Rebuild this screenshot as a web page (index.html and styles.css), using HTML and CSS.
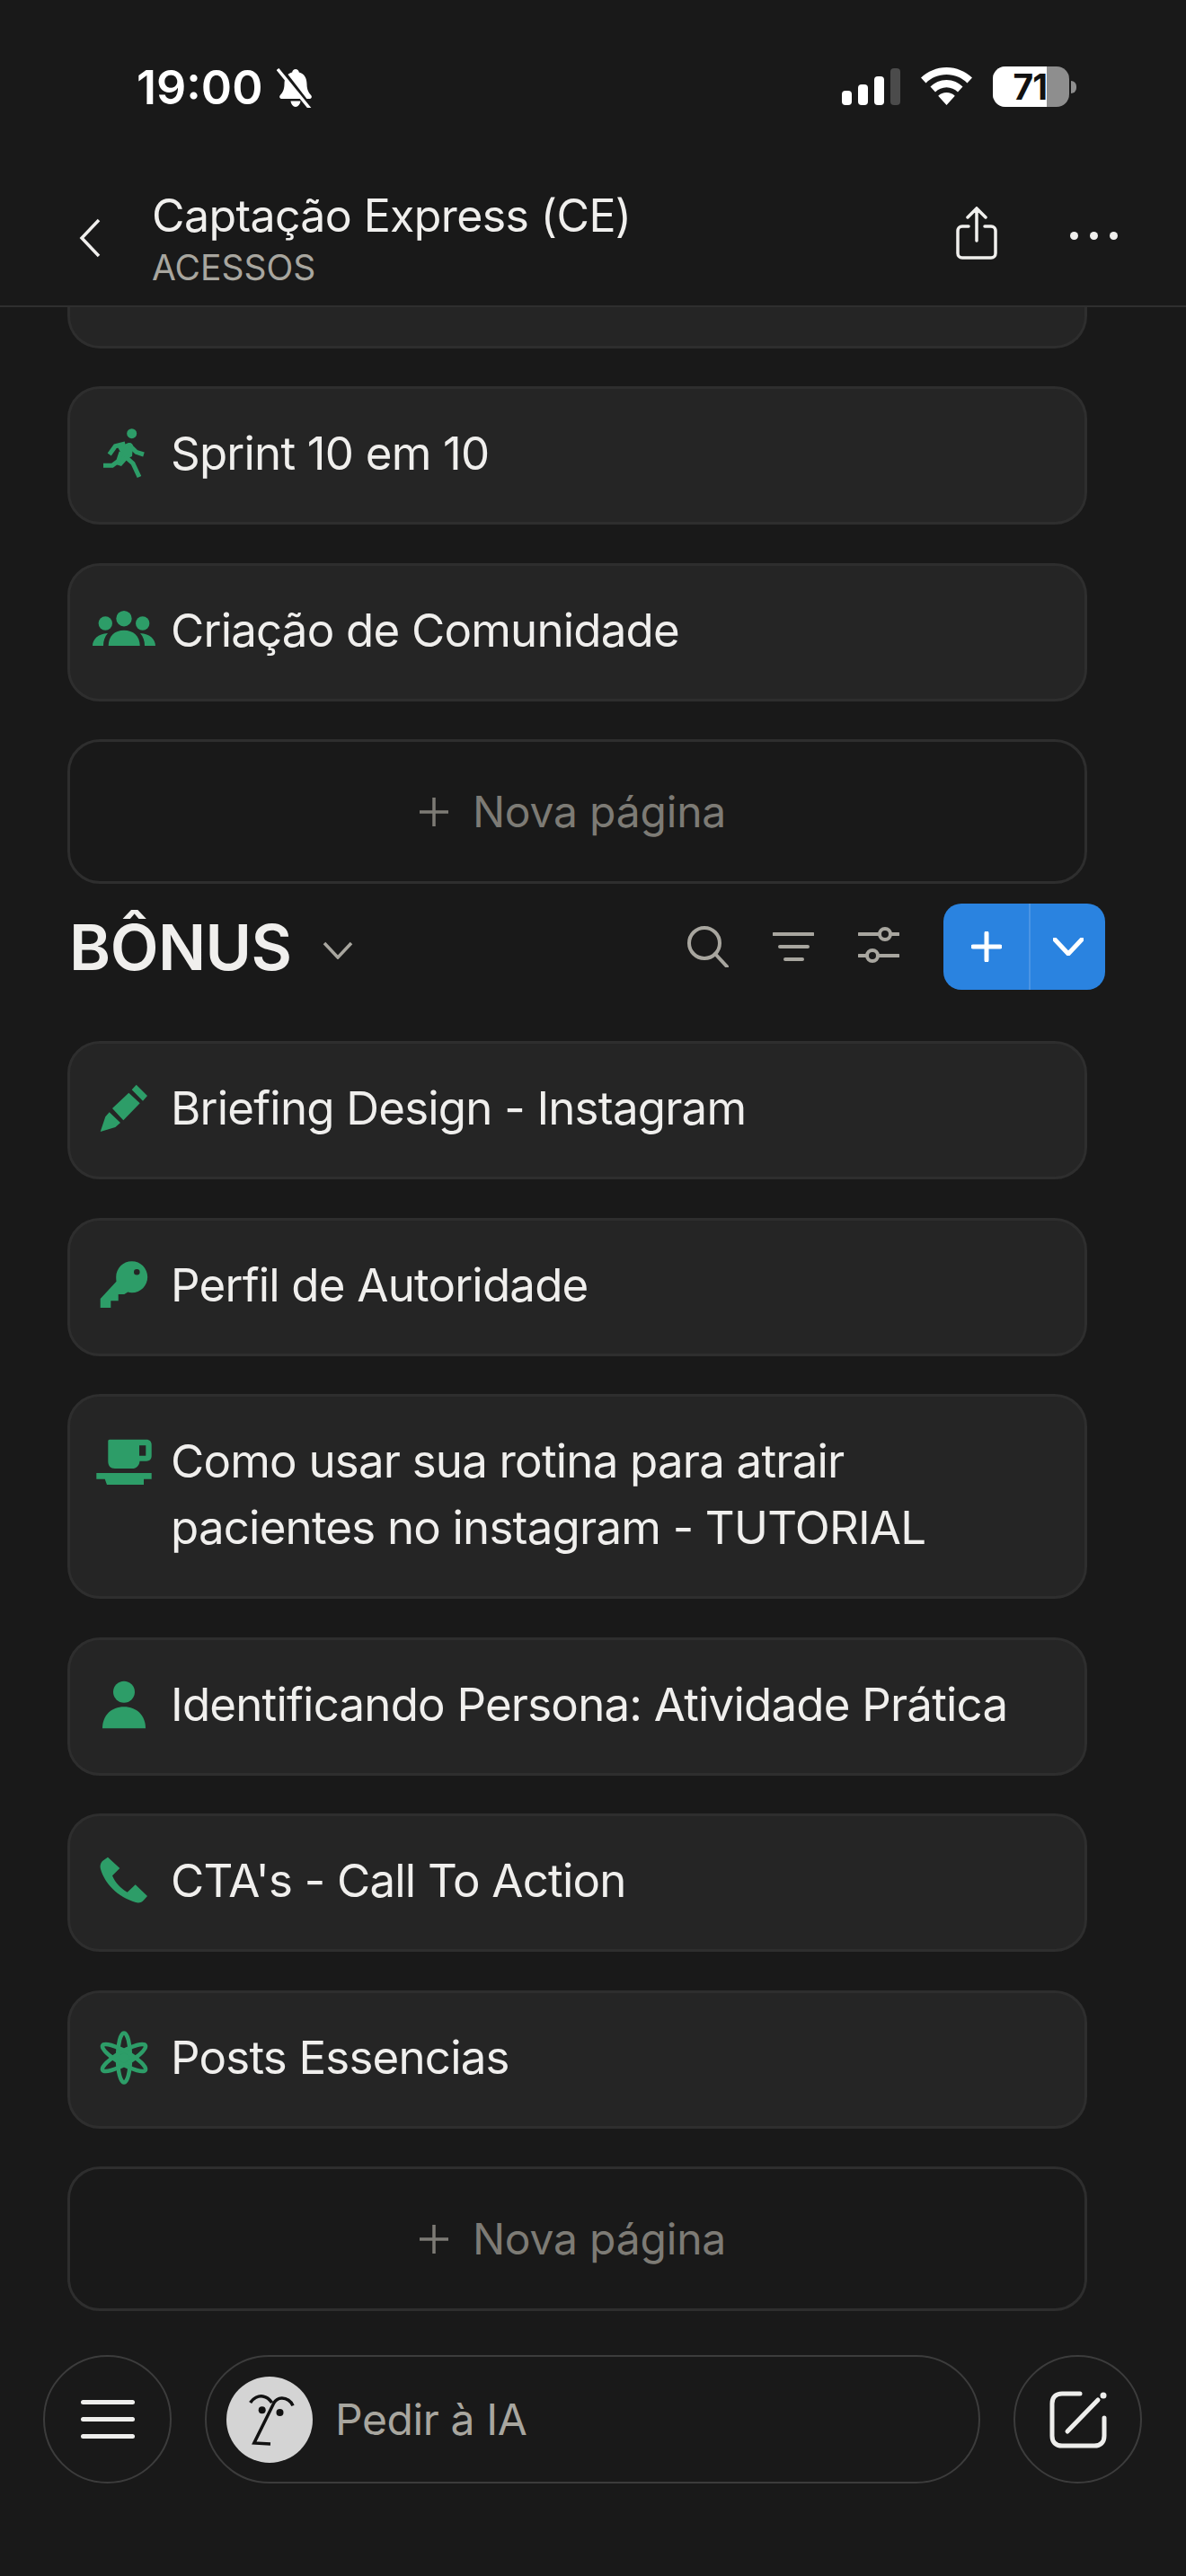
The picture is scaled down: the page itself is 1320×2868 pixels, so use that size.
FILE: index.html
```html
<!DOCTYPE html>
<html lang="pt-BR">
<head>
    <meta charset="UTF-8">
    <meta name="viewport" content="width=device-width, initial-scale=1.0">
    <title>Captação Express (CE)</title>
    <link rel="stylesheet" href="styles.css">
</head>
<body>

<div class="status-bar">
    <div class="status-left">
        <span class="time">19:00</span>
        <svg class="bell" viewBox="0 0 42 44"><path d="M21 1c2 0 3.500 1.500 3.800 3.500 6 1.500 8.700 6.500 8.700 13 0 7 2.500 10 5 13 1 1.500 0 3.500-2 3.500H5.500c-2 0-3-2-2-3.500 2.500-3 5-6 5-13 0-6.500 2.700-11.500 8.700-13C17.500 2.500 19 1 21 1zM15.500 36.500h11c-.4 3.500-2.700 6.500-5.500 6.500s-5.100-3-5.500-6.500z"/><path class="bell-cut" d="M4 0l34 44"/><path class="bell-slash" d="M1 1l36 44"/></svg>
    </div>
    <div class="status-right">
        <div class="signal">
            <span class="bar bar-1"></span>
            <span class="bar bar-2"></span>
            <span class="bar bar-3"></span>
            <span class="bar bar-4"></span>
        </div>
        <svg class="wifi" viewBox="0 0 57 42"><path d="M28.500 0C39.500 0 49.500 4.500 57 11.500l-5.500 6C45.500 11.500 37.500 8 28.500 8S11.500 11.500 5.500 17.500L0 11.500C7.500 4.500 17.500 0 28.500 0zM28.500 14c7 0 13.500 3 18 7.500l-5.500 6c-3.200-3.200-7.700-5.300-12.500-5.300S19.200 24.300 16 27.500l-5.500-6C15 17 21.500 14 28.500 14zM28.500 28c3.500 0 6.800 1.300 9.300 3.700L28.500 42l-9.300-10.300c2.500-2.400 5.800-3.700 9.300-3.700z"/></svg>
        <div class="battery">
            <div class="battery-body">
                <div class="battery-fill"><span>71</span></div>
            </div>
            <span class="battery-nub"></span>
        </div>
    </div>
</div>

<div class="top-bar">
    <svg class="back" viewBox="0 0 24 44"><path d="M22 2L3 22l19 20"/></svg>
    <div class="top-title">
        <div class="title">Captação Express (CE)</div>
        <div class="subtitle">ACESSOS</div>
    </div>
    <svg class="share" viewBox="0 0 48 60"><path d="M24 38V3M14 12L24 2l10 10M15 22H8c-3 0-5 2-5 5v25c0 3 2 5 5 5h32c3 0 5-2 5-5V27c0-3-2-5-5-5h-7"/></svg>
    <div class="more"><span></span><span></span><span></span></div>
</div>

<div class="content">
    <div class="card card-cut"></div>

    <div class="card">
        <svg class="icon" viewBox="0 0 70 74">
            <circle cx="43.700" cy="12.700" r="5.500"/>
            <path d="M28 28l12-5c3-.5 4.500 1 5 3l-1 12-4 2-8 9-6-2 6-12z"/>
            <path class="limb" d="M18.700 36l6.600-9.300 11-2.700M40.300 25l8.400 8.300L57 36M12 48.300h10l6.700-5 3.300-10M36 38l9 8 7 15"/>
        </svg>
        <span class="card-text">Sprint 10 em 10</span>
    </div>

    <div class="card">
        <svg class="icon" viewBox="0 0 70 74">
            <circle cx="35" cy="21.700" r="8.700"/>
            <circle cx="14.300" cy="27" r="7.700"/>
            <circle cx="55.700" cy="27" r="7.700"/>
            <path d="M17.700 52c0-11 7-17.300 17.300-17.300S52.700 41 52.700 52z"/>
            <path d="M0 52c0-7 6-13.500 17-14-3.500 4-5 8.500-5 14zM70 52c0-7-6-13.500-17-14 3.500 4 5 8.500 5 14z"/>
        </svg>
        <span class="card-text">Criação de Comunidade</span>
    </div>

    <div class="new-page">
        <svg class="new-plus" viewBox="0 0 34 34"><path d="M17 1v32M1 17h32"/></svg>
        <span>Nova página</span>
    </div>

    <div class="section-head">
        <div class="section-name">
            <h2>BÔNUS</h2>
            <svg class="section-caret" viewBox="0 0 34 20"><path d="M2 2l15 16L32 2"/></svg>
        </div>
        <div class="section-tools">
            <svg class="tool" viewBox="0 0 46 46"><circle cx="19" cy="19" r="17"/><path d="M31 31l13 14"/></svg>
            <svg class="tool" viewBox="0 0 46 46"><path d="M1 9h44M8 23h31M14 37h19"/></svg>
            <svg class="tool" viewBox="0 0 46 46"><path d="M1 9h23M36 9h9M1 33h9M22 33h23"/><circle cx="30" cy="9" r="6"/><circle cx="16" cy="33" r="6"/></svg>
            <div class="add-btn">
                <span class="add-main"><svg viewBox="0 0 34 34"><path d="M17 2v30M2 17h30"/></svg></span>
                <span class="add-more"><svg viewBox="0 0 34 20"><path d="M2 2l15 16L32 2"/></svg></span>
            </div>
        </div>
    </div>

    <div class="card">
        <svg class="icon" viewBox="0 0 70 74">
            <path d="M8.700 61l5.600-16.700 4.400-5L31 51l-5.700 5zM22 35l18.300-17.300 12.400 11.600-18.400 19zM43.700 14.300l5-5.600L61 21l-5 5.700z"/>
        </svg>
        <span class="card-text">Briefing Design - Instagram</span>
    </div>

    <div class="card">
        <svg class="icon" viewBox="0 0 70 74">
            <path fill-rule="evenodd" d="M43.700 8.200c9.700 0 17.500 7.800 17.500 17.500s-7.800 17.500-17.500 17.500c-1.500 0-3-.2-4.400-.6L35.300 45h-6.600v7.300h-8.400V60H8.700V50L26.500 30.700c-.2-1.600-.3-3.300-.3-5 0-9.700 7.800-17.500 17.500-17.500zM49.300 17a3.300 3.300 0 1 0 0 6.600 3.300 3.300 0 0 0 0-6.600z"/>
        </svg>
        <span class="card-text">Perfil de Autoridade</span>
    </div>

    <div class="card">
        <svg class="icon" viewBox="0 0 70 74">
            <path fill-rule="evenodd" d="M19 10.700h41c3.500 0 5.700 2.300 5.700 5.700v12.600c0 3.500-2.200 5.700-5.700 5.700h-7.500c-.5 5-3.500 8.300-8.500 8.300H25c-5 0-7.700-3-7.700-8V12.500c0-1 .7-1.800 1.700-1.800zM52 17.300v11.400h7.300V17.300z"/>
            <path d="M4.300 48h61.400v6.700H57V61H16l-2.300-6.300H4.300z"/>
        </svg>
        <span class="card-text">Como usar sua rotina para atrair<br>pacientes no instagram - TUTORIAL</span>
    </div>

    <div class="card">
        <svg class="icon" viewBox="0 0 70 74">
            <circle cx="35" cy="20.700" r="12"/>
            <path d="M11 61.300c0-14.500 10-24 24-24s24 9.500 24 24z"/>
        </svg>
        <span class="card-text">Identificando Persona: Atividade Prática</span>
    </div>

    <div class="card">
        <svg class="icon" viewBox="0 0 70 74">
            <path d="M17 8.700l13.300 12.300-8.300 8.300c3.500 8 9 14 16.700 18.400l9-8.400L61 52l-4 4.500c-2 2.500-5.500 3.500-9 2.500C28 53 13.500 38 9 22c-1-3.500-.3-6.500 2-9z"/>
        </svg>
        <span class="card-text">CTA's - Call To Action</span>
    </div>

    <div class="card">
        <svg class="icon" viewBox="0 0 70 74">
            <g class="atom">
                <ellipse cx="35" cy="35" rx="7" ry="27.500"/>
                <ellipse cx="35" cy="35" rx="7" ry="27.500" transform="rotate(60 35 35)"/>
                <ellipse cx="35" cy="35" rx="7" ry="27.500" transform="rotate(120 35 35)"/>
            </g>
            <path d="M35 29l5.200 3v6L35 41l-5.200-3v-6z"/>
        </svg>
        <span class="card-text">Posts Essencias</span>
    </div>

    <div class="new-page">
        <svg class="new-plus" viewBox="0 0 34 34"><path d="M17 1v32M1 17h32"/></svg>
        <span>Nova página</span>
    </div>
</div>

<div class="bottom-bar">
    <div class="round-btn">
        <div class="burger"><span></span><span></span><span></span></div>
    </div>
    <div class="ask-box">
        <svg class="avatar" viewBox="0 0 96 96">
            <circle cx="48" cy="48" r="48" fill="#d4d4d4"/>
            <path d="M26.600 29c3-5 9-8 14-7 5 1 8 4 10 7M74 32.300c-2-5-7-8.500-12.500-8.300-4 .2-7 2.500-8.500 5L30.800 74l18.200 1"/>
            <circle class="eye" cx="39.700" cy="37.300" r="4"/>
            <circle class="eye" cx="59.500" cy="40" r="4"/>
        </svg>
        <span class="ask-text">Pedir à IA</span>
    </div>
    <div class="round-btn">
        <svg class="compose" viewBox="0 0 64 64"><path d="M34 3H14C7 3 3 7 3 14v36c0 7 4 11 11 11h36c7 0 11-4 11-11V30"/><path class="compose-pen" d="M20 45L54 10"/><circle cx="60" cy="5" r="3.500"/></svg>
    </div>
</div>

</body>
</html>
```

FILE: styles.css
```css
* {
    box-sizing: border-box;
}
html, body {
    margin: 0;
    padding: 0;
}
body {
    width: 1320px;
    height: 2868px;
    overflow: hidden;
    display: flex;
    flex-direction: column;
    background-color: #191919;
    color: #f0efed;
    font-family: Inter, "Liberation Sans", sans-serif;
}

/* status bar */
.status-bar {
    height: 202px;
    flex: none;
    display: flex;
    justify-content: space-between;
    padding: 74px 122px 0 152px;
}
.status-left {
    display: flex;
    align-items: flex-start;
    gap: 16px;
}
.time {
    font-size: 52px;
    font-weight: 600;
    line-height: 48px;
    color: #fff;
}
.bell {
    width: 42px;
    height: 44px;
    margin-top: 2px;
    fill: #fff;
}
.bell-cut {
    stroke: #191919;
    stroke-width: 5;
    fill: none;
}
.bell-slash {
    stroke: #fff;
    stroke-width: 3.500;
    fill: none;
}
.status-right {
    display: flex;
    align-items: flex-start;
}
.signal {
    display: flex;
    align-items: flex-end;
    gap: 7px;
    height: 43px;
    margin-right: 23px;
}
.bar {
    width: 11px;
    border-radius: 4px;
    background-color: #fff;
}
.bar-1 {
    height: 16px;
}
.bar-2 {
    height: 23px;
}
.bar-3 {
    height: 32px;
}
.bar-4 {
    height: 41px;
    background-color: #4b4b4b;
}
.wifi {
    width: 57px;
    height: 42px;
    margin-top: 1px;
    margin-right: 23px;
    fill: #fff;
}
.battery {
    display: flex;
    align-items: center;
    height: 45px;
}
.battery-body {
    width: 85px;
    height: 45px;
    border-radius: 14px;
    overflow: hidden;
    background-color: #8e8e8e;
}
.battery-fill {
    width: 60px;
    height: 45px;
    display: flex;
    justify-content: flex-end;
    align-items: center;
    overflow: hidden;
    background-color: #fff;
}
.battery-fill span {
    font-size: 39px;
    font-weight: 700;
    color: #111;
    letter-spacing: -1px;
}
.battery-nub {
    width: 6px;
    height: 14px;
    margin-left: 2px;
    border-radius: 0 7px 7px 0;
    background-color: #8e8e8e;
}

/* top bar */
.top-bar {
    height: 140px;
    flex: none;
    display: flex;
    align-items: flex-start;
    border-bottom: 2px solid #2f2f2f;
    padding-left: 88px;
}
.back {
    width: 24px;
    height: 44px;
    margin-top: 41px;
    fill: none;
    stroke: #f0efed;
    stroke-width: 3.500;
}
.top-title {
    width: 894px;
    margin-left: 57px;
    margin-top: 8px;
}
.title {
    font-size: 50px;
    line-height: 60px;
    letter-spacing: -0.6px;
}
.subtitle {
    margin-top: 5px;
    font-size: 39px;
    line-height: 46px;
    color: #a8a69f;
}
.share {
    width: 48px;
    height: 60px;
    margin-top: 28px;
    fill: none;
    stroke: #f0efed;
    stroke-width: 3.500;
    stroke-linecap: round;
}
.more {
    display: flex;
    gap: 13px;
    margin-top: 56px;
    margin-left: 80px;
}
.more span {
    width: 9px;
    height: 9px;
    border-radius: 50%;
    background-color: #f0efed;
}

/* page list */
.content {
    flex: 1;
    min-height: 0;
    overflow: hidden;
    padding: 0 110px 0 75px;
    display: flex;
    flex-direction: column;
    gap: 42.500px;
}
.card {
    flex: none;
    display: flex;
    align-items: flex-start;
    gap: 17px;
    border: 3px solid #2e2e2e;
    border-radius: 36px;
    background-color: #252525;
    padding: 35px 25px 39px;
}
.card-cut {
    height: 45.500px;
    padding: 0;
    border-top: none;
    border-radius: 0 0 36px 36px;
}
.card-text {
    font-size: 51px;
    line-height: 74px;
    letter-spacing: -0.800px;
}
.icon {
    flex: none;
    width: 70px;
    height: 74px;
    margin-top: 2px;
    margin-bottom: -2px;
    fill: #2d9d68;
}
.limb {
    fill: none;
    stroke: #2d9d68;
    stroke-width: 5;
}
.atom {
    fill: none;
    stroke: #2d9d68;
    stroke-width: 4.500;
}
.new-page {
    flex: none;
    height: 161px;
    display: flex;
    align-items: center;
    justify-content: center;
    gap: 26px;
    border: 3px solid #2e2e2e;
    border-radius: 36px;
    padding-right: 11px;
    font-size: 48px;
    letter-spacing: -0.200px;
    color: #7d7b75;
}
.new-plus {
    width: 34px;
    height: 34px;
    fill: none;
    stroke: #7d7b75;
    stroke-width: 3.500;
}

/* section header */
.section-head {
    flex: none;
    height: 96px;
    margin: -20.500px -20px 14.500px 2px;
    display: flex;
    align-items: center;
    justify-content: space-between;
}
.section-name {
    display: flex;
    align-items: center;
    gap: 34px;
}
.section-name h2 {
    margin: 0;
    font-size: 70px;
    font-weight: 600;
    letter-spacing: -0.500px;
}
.section-caret {
    width: 34px;
    height: 20px;
    margin-top: 8px;
    fill: none;
    stroke: #a8a69f;
    stroke-width: 3.500;
}
.section-tools {
    display: flex;
    align-items: center;
    gap: 49px;
}
.tool {
    width: 46px;
    height: 46px;
    fill: none;
    stroke: #a8a69f;
    stroke-width: 4;
    stroke-linecap: round;
}
.add-btn {
    display: flex;
    height: 96px;
    width: 180px;
    border-radius: 20px;
    overflow: hidden;
    background-color: #2a83e0;
}
.add-main {
    width: 97px;
    display: flex;
    align-items: center;
    justify-content: center;
    border-right: 2px solid #4a94e4;
}
.add-main svg {
    width: 34px;
    height: 34px;
}
.add-more {
    flex: 1;
    display: flex;
    align-items: center;
    justify-content: center;
}
.add-more svg {
    width: 34px;
    height: 20px;
}
.add-btn svg {
    fill: none;
    stroke: #fff;
    stroke-width: 5;
    stroke-linecap: round;
}

/* bottom bar */
.bottom-bar {
    flex: none;
    height: 246px;
    display: flex;
    align-items: flex-start;
    gap: 37px;
    padding: 0 49px 0 48px;
}
.round-btn {
    flex: none;
    width: 143px;
    height: 143px;
    border-radius: 50%;
    border: 2px solid #3c3c3c;
    display: flex;
    align-items: center;
    justify-content: center;
}
.burger {
    display: flex;
    flex-direction: column;
    gap: 14px;
    width: 60px;
}
.burger span {
    height: 5px;
    border-radius: 3px;
    background-color: #eeeeec;
}
.compose {
    width: 64px;
    height: 64px;
    fill: #eeeeec;
}
.compose path {
    fill: none;
    stroke: #eeeeec;
    stroke-width: 5;
    stroke-linecap: round;
}
.ask-box {
    flex: 1;
    height: 143px;
    display: flex;
    align-items: center;
    gap: 25px;
    padding-left: 22px;
    border: 2px solid #3c3c3c;
    border-radius: 72px;
}
.avatar {
    flex: none;
    width: 96px;
    height: 96px;
}
.avatar path {
    fill: none;
    stroke: #111;
    stroke-width: 3.500;
}
.eye {
    fill: #111;
}
.ask-text {
    font-size: 48px;
    letter-spacing: -0.400px;
    color: #a8a69f;
}
```
